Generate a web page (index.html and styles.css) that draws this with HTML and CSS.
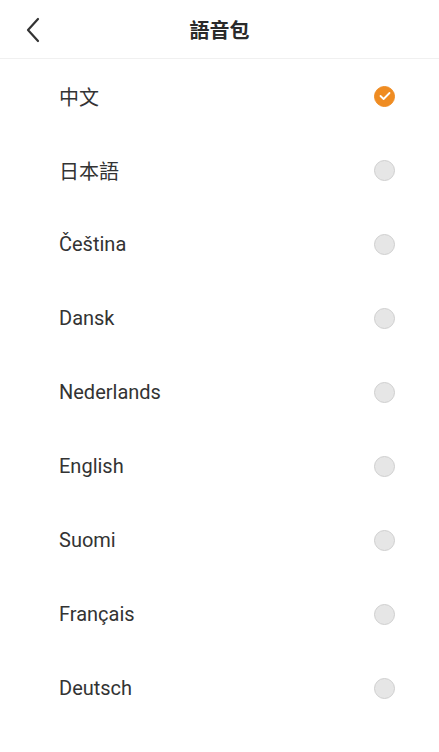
FILE: index.html
```html
<!DOCTYPE html>
<html lang="zh-Hant">
<head>
    <meta charset="UTF-8">
    <meta name="viewport" content="width=device-width, initial-scale=1.0">
    <title>語音包</title>
    <link rel="stylesheet" href="styles.css">
</head>
<body>
    <div class="page">
        <!-- 頂部欄 -->
        <header class="topbar">
            <button class="back" aria-label="返回">
                <svg width="16" height="26" viewBox="0 0 16 26">
                    <path d="M13 2 L3 13 L13 24" fill="none" stroke="#333" stroke-width="2.2" stroke-linecap="round" stroke-linejoin="round"/>
                </svg>
            </button>
            <h1 class="title">語音包</h1>
        </header>

        <!-- 語言列表 -->
        <ul class="lang-list">
            <li class="lang-item"><span>中文</span><span class="radio checked"><svg width="12" height="10" viewBox="0 0 12 10"><path d="M1.5 5 L4.6 8 L10.5 2" fill="none" stroke="#fff" stroke-width="1.8" stroke-linecap="round" stroke-linejoin="round"/></svg></span></li>
            <li class="lang-item"><span>日本語</span><span class="radio"></span></li>
            <li class="lang-item"><span>Čeština</span><span class="radio"></span></li>
            <li class="lang-item"><span>Dansk</span><span class="radio"></span></li>
            <li class="lang-item"><span>Nederlands</span><span class="radio"></span></li>
            <li class="lang-item"><span>English</span><span class="radio"></span></li>
            <li class="lang-item"><span>Suomi</span><span class="radio"></span></li>
            <li class="lang-item"><span>Français</span><span class="radio"></span></li>
            <li class="lang-item"><span>Deutsch</span><span class="radio"></span></li>
        </ul>
    </div>
</body>
</html>
```

FILE: styles.css
```css
/* 頁面 */
body {
    margin: 0;
    background: #fff;
    font-family: Roboto, "Noto Sans CJK TC", sans-serif;
    color: #333;
    overflow: hidden;
}

.page {
    width: 439px;
    height: 752px;
    overflow: hidden;
}

/* 頂部欄 */
.topbar {
    position: relative;
    height: 58px;
    display: flex;
    align-items: center;
    justify-content: center;
    border-bottom: 1px solid #f0f0f0;
}

.back {
    position: absolute;
    left: 25px;
    top: 17px;
    padding: 0;
    border: none;
    background: none;
    line-height: 0;
}

.title {
    margin: 0;
    font-size: 20px;
    font-weight: bold;
    color: #2a2a2a;
    letter-spacing: 0;
}

/* 語言列表 */
.lang-list {
    list-style: none;
    margin: 0;
    padding: 0;
}

.lang-item {
    height: 74px;
    display: flex;
    align-items: center;
    justify-content: space-between;
    padding: 0 44px 0 59px;
    font-size: 20px;
    color: #333;
}

.radio {
    width: 19px;
    height: 19px;
    border-radius: 50%;
    background: #e6e6e6;
    border: 1px solid #cfcfcf;
    display: flex;
    align-items: center;
    justify-content: center;
}

.radio.checked {
    background: #ef8c22;
    border-color: #ef8c22;
}
```
